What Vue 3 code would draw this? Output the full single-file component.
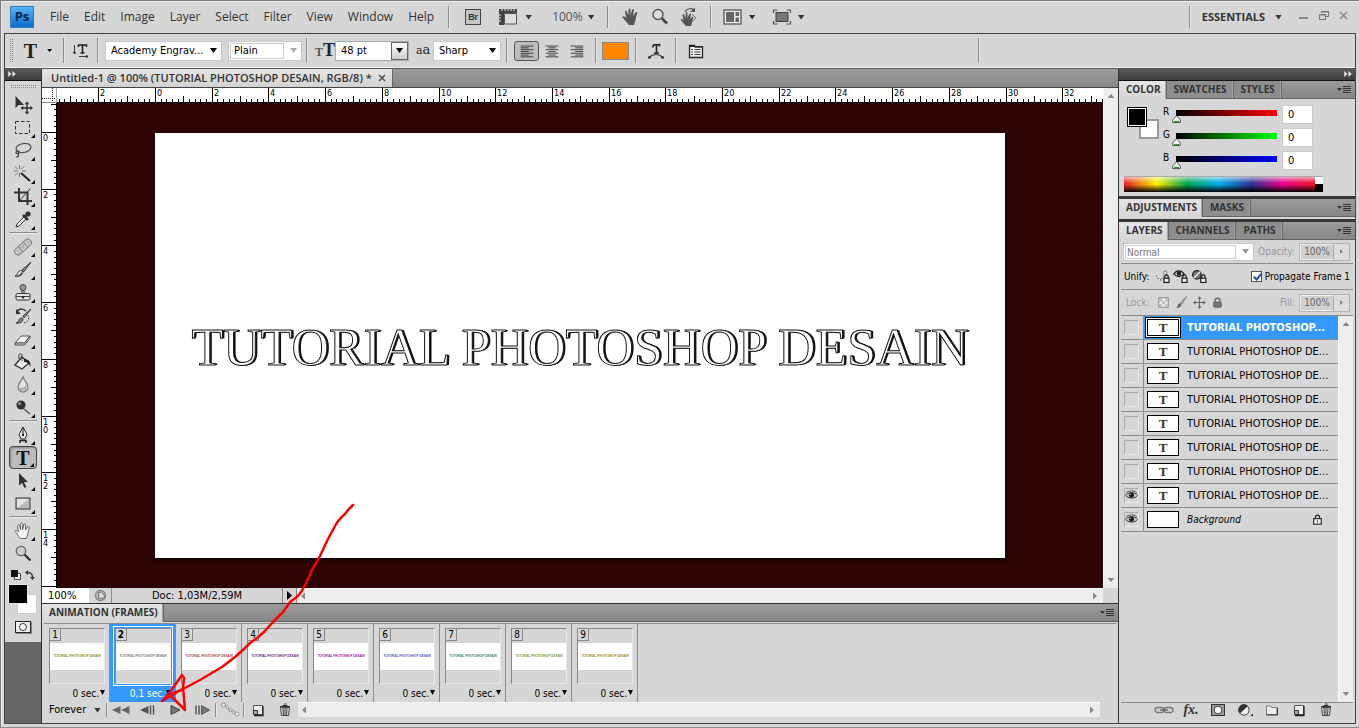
<script setup>
import { ref, computed, onMounted, onBeforeUnmount } from 'vue'

const menus = ['File', 'Edit', 'Image', 'Layer', 'Select', 'Filter', 'View', 'Window', 'Help']

const icons = {
  move: '<path d="M2.500 1v12l3-3 1.500 0h4z" fill="#333"/><path d="M14 8v10M9 13h10" stroke="#333" stroke-width="1.400"/><path d="M14 6.500l2.300 2.700h-4.600zM14 19.500l2.300-2.700h-4.600zM7.500 13l2.700-2.300v4.600zM20 13l-2.700-2.300v4.600z" fill="#333"/>',
  marquee: '<rect x="2.500" y="3.500" width="14" height="12" fill="none" stroke="#333" stroke-dasharray="3.500 2"/>',
  lasso: '<ellipse cx="10.500" cy="7" rx="7.500" ry="4.500" transform="rotate(-10 10.500 7)" fill="none" stroke="#555" stroke-width="1.300"/><path d="M4 10c-2 1-1 3 1 2.500s1-3-.5-2.500M5 12.500c1.500 2 0 3-1.500 4" fill="none" stroke="#444" stroke-width="1.300"/>',
  wand: '<path d="M8 9l9 8" stroke="#222" stroke-width="2"/><path d="M6.500 1v4M6.500 9v4M.5 7h4M9 7h4M2 2.500l3 3M11 2.500l-3 3M2 11.500l3-3" stroke="#777"/>',
  crop: '<path d="M6 1v13h13M1 5.500h13.500V18" fill="none" stroke="#333" stroke-width="2"/><path d="M17.500 1.500L7 13" stroke="#333"/>',
  eyedrop: '<path d="M3 17l1-3 7-7 2 2-7 7z" fill="#eee" stroke="#333"/><path d="M10 5l5 5M12 7l3.500-4" stroke="#333" stroke-width="2.500"/><circle cx="15" cy="4" r="2.600" fill="#333"/>',
  heal: '<g transform="rotate(-42 10 10)"><rect x="0" y="6.500" width="20" height="7" rx="3.500" fill="#ccc" stroke="#777"/><path d="M6.500 7v6M13.500 7v6" stroke="#888"/><path d="M8 9h1M11 9h1M9.500 11h1M3 9h1M3 11h1M16 9h1M16 11h1" stroke="#777"/></g>',
  brush: '<path d="M18 2L9 10l1.500 2z" fill="#999" stroke="#333"/><path d="M2 16c3 0 2-5 5.500-5.500 2 0 3 1.500 2 3C8 16 5 17 2 16z" fill="#eee" stroke="#333"/><path d="M3 16c3-.5 4-1.500 6-4 .5 2-2 4.500-6 4z" fill="#333"/>',
  stamp: '<circle cx="10" cy="4.500" r="3" fill="#999" stroke="#444"/><path d="M9 7.500v3M11 7.500v3" stroke="#333"/><rect x="3" y="10.500" width="14" height="6.500" rx="1.500" fill="#e4e4e4" stroke="#333"/><path d="M3 13.500h14" stroke="#444"/><path d="M8 13.500h4l-2 2.500z" fill="#222"/>',
  history: '<path d="M18 3l-8 7 1 2z" fill="#999" stroke="#333"/><path d="M3 17c3 0 2-4 5-5 2 0 2.500 1.500 1.500 3-1.500 2-4 2.500-6.500 2z" fill="#888" stroke="#333"/><path d="M4 5c3-3 7-2 9 0" fill="none" stroke="#333" stroke-width="1.500"/><path d="M3 3v5h5z" fill="#333"/><path d="M15 9c2 4 0 7-4 8" fill="none" stroke="#333" stroke-dasharray="1.500 1.500"/>',
  eraser: '<path d="M2 14l6-7h9l-5.500 7z" fill="#eee" stroke="#555"/><path d="M2 14h9.500l5.500-7v2.500L11.500 16H2z" fill="#ccc" stroke="#555"/>',
  bucket: '<path d="M2 13l7-8 7 6-7 6z" fill="#eee" stroke="#333" stroke-width="1.300"/><path d="M9 9V3.500C9 1 6 1 6 3.500V7" fill="none" stroke="#333"/><path d="M11 7c4 0 7 2 6.500 8-1-3-3-5-6.500-5z" fill="#222"/>',
  blur: '<path d="M10 2c1.500 4 5 6.500 5 10a5 5 0 01-10 0c0-3.500 3.500-6 5-10z" fill="#e4e4e4" stroke="#777" stroke-width="1.200"/><path d="M6.500 12a3.500 3.500 0 007 0c0-1-.5-2-1-3 0 4-3 5-6 3z" fill="#aaa"/>',
  dodge: '<circle cx="8" cy="7" r="4.600" fill="#333"/><circle cx="6.500" cy="5.500" r="1.500" fill="#999"/><path d="M11 11l6 5" stroke="#555" stroke-width="1.500"/>',
  pen: '<path d="M10 2L6 9.500 8 14h4l2-4.500z" fill="#eee" stroke="#222"/><path d="M10 3v6" stroke="#222"/><circle cx="10" cy="10" r="1.200" fill="#222"/><path d="M7 15.500h6v2.500M7 15v3" fill="none" stroke="#222" stroke-width="1.500"/>',
  path: '<path d="M6 2v12.500l3-2.500 2.500 5 2-1-2.500-5h4z" fill="#333"/>',
  shape: '<rect x="3" y="4" width="14" height="11" fill="#bbb" stroke="#333"/><path d="M4 14V5h12z" fill="#e4e4e4"/>',
  hand: '<path d="M7.500 17.500C5 15 3.500 12 2 10.500c0-2 2-1.500 3.500.5L4.500 5c0-2 1.800-2 2.200 0l.8 3.500V3.500c.2-1.800 2-1.800 2.200 0v5l1-4.500c.4-1.700 2.200-1.500 2 .3L12.500 9l1.800-3c1-1.300 2.500-.3 2 1-1 3.500-1.300 7.500-3.300 10.500z" fill="#f4f4f4" stroke="#666"/>',
  zoom: '<circle cx="8" cy="7" r="4.700" fill="#ccc" stroke="#666" stroke-width="1.300"/><path d="M11.500 10.500l6 6" stroke="#333" stroke-width="2.400"/>',
  handDark: '<path d="M8 18C5 15 3.500 12 1.500 10.500c0-2 2-1.500 4 .5L4 5c0-2 1.600-2 2 0l1.500 3.500V2.500c.2-1.500 1.800-1.500 2 0v6l1.500-5.500c.4-1.500 2-1.200 1.800.3L12 9l2.500-3.500c1-1 2.200-.2 1.700 1-1.700 4-1.700 8.500-3.200 11.500z" fill="#555"/>',
  zoomOpen: '<circle cx="8" cy="7.500" r="5" fill="#ddd" stroke="#555" stroke-width="1.400"/><path d="M12 11.500l5 5" stroke="#444" stroke-width="2.600"/>',
  rotate: '<path d="M7 19C5 17 3 14 1.500 13c0-1.500 1.500-1.500 3 0L3.500 8c0-1.500 1.300-1.500 1.800 0L6.500 11 6.800 6c.2-1.300 1.500-1.300 1.700 0v5l2-4c.6-1 1.800-.6 1.600.5L11 12l2-2c1-.8 2 0 1.400 1-1.400 3-1.400 6-2.400 8z" fill="#555"/><path d="M6 5c2-4 6-4 9-2" fill="none" stroke="#555" stroke-width="1.200"/><path d="M16 .5v4.500h-5z" fill="#555"/><path d="M13 7l4 4-4 4" fill="none" stroke="#777"/>',
  layout: '<rect x="1" y="3" width="17" height="14" fill="#eee" stroke="#555" stroke-width="1.300"/><path d="M3 5h8v10H3zM12.500 5H16v4h-3.500zM12.500 10.500H16V15h-3.500z" fill="#666"/>',
  screen: '<path d="M1.500 6V3h4M14.500 3h4v3M18.500 14v3h-4M5.500 17h-4v-3" fill="none" stroke="#555" stroke-width="1.200"/><rect x="4" y="5.500" width="12" height="9" fill="#777" stroke="#444"/>',
  extras: '<path d="M1 2h18v4H6v12H1z" fill="#444"/><path d="M4 2v2M7 2v2M10 2v2M13 2v2M16 2v2M1 8h2M1 11h2M1 14h2" stroke="#eee"/><path d="M6.500 6.500h12v10.500h-12z" fill="#ddd" stroke="#555"/>',
  warp: '<path d="M3 16.500c4-4 10-4 14 0" fill="none" stroke="#333" stroke-width="1.200"/><path d="M2 15.500h3v2H2zM15 15.500h3v2h-3z" fill="#333"/><path d="M6.500 6.500l1-2.500 6-.5v2M10.500 3.500v8M8 12h5" fill="none" stroke="#222" stroke-width="1.600"/>',
  palette: '<path d="M3.500 16.500V4.500h5l1 1.500h7v10.500z" fill="#eee" stroke="#222" stroke-width="1.300"/><path d="M4 5.500h12.500" stroke="#222"/><path d="M5 8.500h2M8.500 8.500h6M5 11h2M8.500 11h6M5 13.500h2M8.500 13.500h6" stroke="#444"/>',
  page: '<path d="M5.500 5.500h9v9H9l-3.500-4z" fill="#eee" stroke="#555"/><path d="M5.500 14.500v-4h4v4z" fill="#aaa" stroke="#333"/><path d="M15 6v9.500H6" fill="none" stroke="#222" stroke-width="1.300"/>',
  trash: '<path d="M5 6.500h10M7.500 5.500h5M9 4h2.500" stroke="#333" stroke-width="1.200"/><path d="M5.500 7.500h9l-1 8H6.500z" fill="#ddd" stroke="#444"/><path d="M8 8l.5 7M10 8v7M12 8l-.5 7" stroke="#444"/>',
  tween: '<circle cx="3.500" cy="5" r="2" fill="#eee" stroke="#888"/><circle cx="7.500" cy="7.500" r="1.500" fill="#ddd" stroke="#999"/><circle cx="10.500" cy="10" r="1.500" fill="#ddd" stroke="#999"/><circle cx="13.500" cy="12" r="1.500" fill="#ddd" stroke="#999"/><circle cx="17" cy="14" r="2" fill="#eee" stroke="#999"/>',
  rewind: '<path d="M9.500 6v8L1 10zM18.500 6v8L10 10z" fill="#666"/>',
  prev: '<path d="M10.500 6v8L2 10z" fill="#555"/><path d="M12.500 5.500v9M15.500 5.500v9" stroke="#555" stroke-width="1.500"/>',
  play: '<path d="M6 5.500v9l9-4.500z" fill="#777" stroke="#444"/>',
  next: '<path d="M9.500 5.500v9l8-4.500z" fill="#777" stroke="#555"/><path d="M4 5.500v9M7 5.500v9" stroke="#555" stroke-width="1.500"/>',
  link: '<rect x="1" y="7.500" width="9" height="5" rx="2.500" fill="none" stroke="#777" stroke-width="1.300"/><rect x="10" y="7.500" width="9" height="5" rx="2.500" fill="none" stroke="#777" stroke-width="1.300"/><path d="M6 10h8" stroke="#555" stroke-width="1.300"/>',
  mask: '<rect x="3.500" y="4.500" width="13" height="11" fill="#999" stroke="#333"/><circle cx="10" cy="10" r="3.800" fill="#fff" stroke="#444"/>',
  adjust: '<circle cx="9" cy="10" r="5.200" fill="#eee" stroke="#444"/><path d="M4.800 13.500A5.500 5.500 0 0113 6z" fill="#333"/><path d="M15.500 16h2.500v-2.500z" fill="#222"/>',
  folder: '<path d="M4.500 14.500V6h4l1 1.500h5.500v7z" fill="#eee" stroke="#777"/><path d="M4.500 15h11V8" fill="none" stroke="#333"/>',
  uPos: '<path d="M2 9v1M4 12v1M6 14h1M8 12v1M10 9v1" stroke="#333" stroke-width="1.500"/><circle cx="12" cy="5.500" r="2" fill="#eee" stroke="#666"/><path d="M11.500 12v-2c0-2.500 4-2.500 4 0v2" fill="none" stroke="#111" stroke-width="1.300"/><rect x="10.500" y="12" width="6" height="5" fill="#eee" stroke="#111" stroke-width="1.300"/>',
  uVis: '<path d="M1 7c3-5 9-5 12 0-3 4-9 4-12 0z" fill="#ddd" stroke="#222" stroke-width="1.500"/><circle cx="7" cy="6.500" r="2.700" fill="#222"/><path d="M11.500 12v-2c0-2.500 4-2.500 4 0v2" fill="none" stroke="#111" stroke-width="1.300"/><rect x="10.500" y="12" width="6" height="5" fill="#eee" stroke="#111" stroke-width="1.300"/>',
  uSty: '<circle cx="7" cy="8" r="5" fill="#777" stroke="#222" stroke-width="1.500"/><path d="M3 12L11 4" stroke="#eee" stroke-width="1.600"/><path d="M12.500 12v-2c0-2.500 4-2.500 4 0v2" fill="none" stroke="#111" stroke-width="1.300"/><rect x="11.500" y="12" width="6" height="5" fill="#eee" stroke="#111" stroke-width="1.300"/>',
  lTrans: '<rect x="4.500" y="4.500" width="11" height="11" fill="#eee" stroke="#777"/><path d="M5 5h3.500v3.500H5zM12 5h3v3.500h-3zM8.500 8.500H12V12H8.500zM5 12h3.500v3H5zM12 12h3v3h-3z" fill="#bbb"/>',
  lBrush: '<path d="M16 3L9 10l1.500 2z" fill="#bbb" stroke="#777"/><path d="M3 16c3 0 2-4.500 5-5 2 0 2.500 1.500 1.500 3-1.500 2-4 2.500-6.500 2z" fill="#666"/>',
  lMove: '<path d="M10 5v10M5 10h10" stroke="#666" stroke-width="1.300"/><path d="M10 2.500l2.500 3h-5zM10 17.500l2.500-3h-5zM2.500 10l3-2.500v5zM17.500 10l-3-2.500v5z" fill="#666"/>',
  lAll: '<path d="M7 10V8c0-4 6-4 6 0v2" fill="none" stroke="#666" stroke-width="1.600"/><rect x="5.500" y="9.500" width="9" height="6" rx="1" fill="#777" stroke="#555"/>',
  padlock: '<path d="M7.500 9V7.500c0-3.500 5-3.500 5 0V9" fill="none" stroke="#222" stroke-width="1.300"/><rect x="5.500" y="9" width="9" height="6.500" fill="#eee" stroke="#222" stroke-width="1.300"/><path d="M10 11v2.500" stroke="#222"/>',
  eye: '<path d="M2 10c3-5 13-5 16 0-3 4.500-13 4.500-16 0z" fill="#ccc" stroke="#333" stroke-width="1.300"/><circle cx="10" cy="9.700" r="3.300" fill="#111"/><path d="M3 6.500c3-3.500 11-3.500 14 0" fill="none" stroke="#444" stroke-width="1.300"/><circle cx="9" cy="8.700" r=".8" fill="#fff"/>',
}

const toolGroups = [
  ['move', 'marquee', 'lasso', 'wand', 'crop', 'eyedrop'],
  ['heal', 'brush', 'stamp', 'history', 'eraser', 'bucket', 'blur', 'dodge'],
  ['pen', 'type', 'path', 'shape'],
  ['hand', 'zoom'],
]

// Rulers: one tick per 2 mm, a label every 2 cm, cut to the visible length.
const CM = 28.35
const canvasEl = ref(null)
const canvasW = ref(1000)
const canvasH = ref(480)
function measure() {
  canvasW.value = canvasEl.value.clientWidth
  canvasH.value = canvasEl.value.clientHeight
}
onMounted(() => {
  measure()
  window.addEventListener('resize', measure)
})
onBeforeUnmount(() => window.removeEventListener('resize', measure))

function ticks(origin, length, major) {
  const out = []
  const step = CM / 5
  for (let i = -Math.floor(origin / step); origin + i * step < length; i++) {
    const pos = Math.round(origin + i * step) + 0.5
    const isMajor = i % 10 === 0
    out.push({
      pos,
      len: isMajor ? major : i % 5 === 0 ? 6 : 3,
      label: isMajor && pos < length - 16 ? String(Math.abs(i / 5)) : '',
    })
  }
  return out
}
const hTicks = computed(() => ticks((canvasW.value - 850) / 2, canvasW.value, 14))
const vTicks = computed(() => ticks((canvasH.value - 425) / 2 - 1, canvasH.value, 15))

const channels = ref([
  { name: 'R', value: 0, cls: 'red' },
  { name: 'G', value: 0, cls: 'green' },
  { name: 'B', value: 0, cls: 'blue' },
])

const layers = [
  { name: 'TUTORIAL PHOTOSHOP...', selected: true, text: true },
  ...Array.from({ length: 6 }, () => ({ name: 'TUTORIAL PHOTOSHOP DE...', text: true })),
  { name: 'TUTORIAL PHOTOSHOP DE...', text: true, visible: true },
  { name: 'Background', visible: true, locked: true },
]

const frames = [
  { color: '#908a1c', delay: '0 sec.' },
  { color: '#7a7a7a', delay: '0,1 sec.', selected: true },
  { color: '#b0403d', delay: '0 sec.' },
  { color: '#6a2580', delay: '0 sec.' },
  { color: '#a010a8', delay: '0 sec.' },
  { color: '#5a58c0', delay: '0 sec.' },
  { color: '#3a8472', delay: '0 sec.' },
  { color: '#76a030', delay: '0 sec.' },
  { color: '#a08a18', delay: '0 sec.' },
]
const propagate = ref(true)
</script>

<template>
  <div class="app">
    <header class="menubar">
      <div class="logo">Ps</div>
      <nav class="menus">
        <button v-for="m in menus" :key="m" class="menu">{{ m }}</button>
      </nav>
      <i class="rule"></i>
      <button class="bridge">Br</button>
      <button class="drop extras" aria-label="View extras"><svg class="ic" viewBox="0 0 20 20" v-html="icons.extras"></svg><i class="tri"></i></button>
      <button class="drop zoomlevel">100%<i class="tri"></i></button>
      <i class="rule"></i>
      <div class="navtools">
        <button aria-label="Hand"><svg class="ic" viewBox="0 0 20 20" v-html="icons.handDark"></svg></button>
        <button aria-label="Zoom"><svg class="ic" viewBox="0 0 20 20" v-html="icons.zoomOpen"></svg></button>
        <button aria-label="Rotate view"><svg class="ic" viewBox="0 0 20 20" v-html="icons.rotate"></svg></button>
      </div>
      <i class="rule"></i>
      <button class="drop" aria-label="Arrange documents"><svg class="ic" viewBox="0 0 20 20" v-html="icons.layout"></svg><i class="tri"></i></button>
      <button class="drop" aria-label="Screen mode"><svg class="ic" viewBox="0 0 20 20" v-html="icons.screen"></svg><i class="tri"></i></button>
      <i class="rule push"></i>
      <button class="workspace">ESSENTIALS<i class="tri"></i></button>
      <div class="winbtns">
        <button aria-label="Minimize"><svg viewBox="0 0 12 12"><path d="M1 8h9" stroke="#888" stroke-width="2" /></svg></button>
        <button aria-label="Restore"><svg viewBox="0 0 12 12"><path d="M3.500 3V1.500h7v5H8M1.500 4.500h6v5h-6zM1.500 5h6M4 2h6" fill="none" stroke="#777" /></svg></button>
        <button aria-label="Close"><svg viewBox="0 0 12 12"><path d="M2 2l7 7M9 2l-7 7" stroke="#888" stroke-width="1.500" /></svg></button>
      </div>
    </header>

    <div class="frame">
      <section class="options">
        <i class="grip"></i>
        <button class="tpreset">T<i class="tri small"></i></button>
        <i class="rule"></i>
        <button class="orient" aria-label="Text orientation">
          <svg class="ic" viewBox="0 0 20 20"><path d="M3.500 4v9M2 11l1.500 2L5 11M8 15.500h9M15 14l2 1.500-2 1.500" fill="none" stroke="#333" /><path d="M7.500 6V4h8v2M11.500 4v8M9.500 12h4" fill="none" stroke="#222" stroke-width="1.600" /></svg>
        </button>
        <i class="rule"></i>
        <span class="field family"><select aria-label="Font family"><option>Academy Engrav...</option></select><i class="tri"></i></span>
        <span class="field style"><select aria-label="Font style"><option>Plain</option></select><i class="tri"></i></span>
        <i class="rule"></i>
        <span class="tt" aria-hidden="true"><small>T</small>T</span>
        <span class="field size"><select aria-label="Font size"><option>48 pt</option></select><i class="arrowbox"><i class="tri"></i></i></span>
        <span class="aa" aria-hidden="true">a<b>a</b></span>
        <span class="field anti"><select aria-label="Anti-aliasing"><option>Sharp</option></select><i class="tri"></i></span>
        <i class="rule"></i>
        <div class="aligns">
          <button class="align on" aria-label="Left align"><svg class="ic" viewBox="0 0 20 20"><path d="M3 4.500h14M3 6.500h9M3 8.500h14M3 10.500h9M3 12.500h14M3 14.500h9M3 16.500h14" stroke="#333" /></svg></button>
          <button class="align" aria-label="Center"><svg class="ic" viewBox="0 0 20 20"><path d="M3 4.500h14M6 6.500h8M3 8.500h14M6 10.500h8M3 12.500h14M6 14.500h8M3 16.500h14" stroke="#333" /></svg></button>
          <button class="align" aria-label="Right align"><svg class="ic" viewBox="0 0 20 20"><path d="M3 4.500h14M8 6.500h9M3 8.500h14M8 10.500h9M3 12.500h14M8 14.500h9M3 16.500h14" stroke="#333" /></svg></button>
        </div>
        <i class="rule"></i>
        <button class="textcolor" aria-label="Text color"></button>
        <i class="rule"></i>
        <button class="optbtn" aria-label="Warp text"><svg class="ic" viewBox="0 0 20 20" v-html="icons.warp"></svg></button>
        <i class="rule"></i>
        <button class="optbtn" aria-label="Character panel"><svg class="ic" viewBox="0 0 20 20" v-html="icons.palette"></svg></button>
        <i class="rule end"></i>
      </section>

      <div class="work">
        <aside class="toolbox">
          <div class="darkhead"><svg viewBox="0 0 9 7"><path d="M0 0l4 3.500L0 7zM5 0l4 3.500L5 7z" fill="#ddd" /></svg></div>
          <div class="tools">
            <i class="hgrip"></i>
            <div v-for="(g, gi) in toolGroups" :key="gi" class="group">
              <button v-for="t in g" :key="t" :class="['tool', { on: t === 'type' }]" :aria-label="t">
                <span v-if="t === 'type'" class="bigt">T</span>
                <svg v-else class="ic" viewBox="0 0 20 20" v-html="icons[t]"></svg>
                <i v-if="t !== 'move' && t !== 'zoom'" class="corner"></i>
              </button>
            </div>
            <div class="swapline">
              <svg viewBox="0 0 12 12"><path d="M4.500 4.500h6v6h-6z" fill="#fff" stroke="#444" /><path d="M1 1h7v7H1z" fill="#111" /></svg>
              <svg viewBox="0 0 12 12"><path d="M3 3.500c4 0 5.500 1 5.500 5" fill="none" stroke="#333" stroke-width="1.500" /><path d="M4 1v5L1 3.500zM6 8h5l-2.500 3z" fill="#333" /></svg>
            </div>
            <div class="fgbg"><i class="bg"></i><i class="fg"></i></div>
            <button class="quick" aria-label="Quick mask"><i></i></button>
          </div>
        </aside>

        <main class="center">
          <div class="docbar">
            <div class="doctab">Untitled-1 @ 100% (TUTORIAL PHOTOSHOP DESAIN, RGB/8) *
              <button aria-label="Close document"><svg viewBox="0 0 8 8"><path d="M1 1l6 6M7 1L1 7" stroke="#444" stroke-width="1.400" /></svg></button>
            </div>
          </div>
          <div class="docarea">
            <div class="corner0"><svg viewBox="0 0 14 14"><path d="M0 10.500h14M10.500 0v14" stroke="#222" stroke-dasharray="1 1" /></svg></div>
            <svg class="hruler">
              <g v-for="t in hTicks" :key="t.pos">
                <line :x1="t.pos" :x2="t.pos" :y1="14 - t.len" y2="14" />
                <text v-if="t.label" :x="t.pos + 1.5" y="8">{{ t.label }}</text>
              </g>
            </svg>
            <div class="vscroll">
              <i class="up"></i><i class="down"></i>
            </div>
            <svg class="vruler">
              <g v-for="t in vTicks" :key="t.pos">
                <line :x1="15 - t.len" x2="15" :y1="t.pos" :y2="t.pos" />
                <text v-for="(d, di) in t.label" :key="di" x="1" :y="t.pos + 8.5 + di * 8">{{ d }}</text>
              </g>
            </svg>
            <div ref="canvasEl" class="canvas"><div class="page"><span>TUTORIAL PHOTOSHOP DESAIN</span></div></div>
          </div>
          <div class="status">
            <input class="pct" value="100%" aria-label="Zoom level" />
            <span class="clock"><svg viewBox="0 0 14 14"><circle cx="7" cy="7" r="5.500" fill="#bbb" stroke="#888" stroke-width="1.500" /><path d="M5 3.500h3l3 3V10H5z" fill="#ddd" stroke="#666" /></svg></span>
            <span class="docsize">Doc: 1,03M/2,59M</span>
            <button class="more" aria-label="Status options"><i></i></button>
            <div class="hscroll"><i class="toleft"></i><i class="toright"></i></div>
            <i class="sizer"></i>
          </div>

          <section class="anim">
            <div class="tabs"><button class="tab on">ANIMATION (FRAMES)</button><i class="panelmenu"></i></div>
            <div class="frames">
              <div v-for="(f, i) in frames" :key="i" :class="['cell', { sel: f.selected }]">
                <div class="shot"><b>{{ i + 1 }}</b><span :style="{ color: f.color }">TUTORIAL PHOTOSHOP DESAIN</span></div>
                <div class="delay">{{ f.delay }}<i class="tri"></i></div>
              </div>
            </div>
            <div class="controls">
              <span class="loop"><select aria-label="Looping"><option>Forever</option></select><i class="tri"></i></span>
              <i class="rule"></i>
              <button aria-label="First frame"><svg class="ic" viewBox="0 0 20 20" v-html="icons.rewind"></svg></button>
              <button aria-label="Previous frame"><svg class="ic" viewBox="0 0 20 20" v-html="icons.prev"></svg></button>
              <button aria-label="Play"><svg class="ic" viewBox="0 0 20 20" v-html="icons.play"></svg></button>
              <button aria-label="Next frame"><svg class="ic" viewBox="0 0 20 20" v-html="icons.next"></svg></button>
              <i class="rule"></i>
              <button aria-label="Tween"><svg class="ic" viewBox="0 0 20 20" v-html="icons.tween"></svg></button>
              <i class="rule"></i>
              <button aria-label="Duplicate frame"><svg class="ic" viewBox="0 0 20 20" v-html="icons.page"></svg></button>
              <button aria-label="Delete frame"><svg class="ic" viewBox="0 0 20 20" v-html="icons.trash"></svg></button>
              <div class="hscroll"><i class="toleft"></i><i class="toright"></i></div>
            </div>
          </section>
        </main>

        <aside class="panels">
          <div class="darkhead end"><svg viewBox="0 0 9 7"><path d="M0 0l4 3.500L0 7zM5 0l4 3.500L5 7z" fill="#ddd" /></svg></div>
          <section class="panel color">
            <div class="tabs"><button class="tab on">COLOR</button><button class="tab">SWATCHES</button><button class="tab">STYLES</button><i class="panelmenu"></i></div>
            <div class="mixer">
              <div class="pair"><i class="bg"></i><i class="fg"></i></div>
              <div class="sliders">
                <label v-for="c in channels" :key="c.name" class="chan">
                  <span>{{ c.name }}</span>
                  <input v-model.number="c.value" type="range" min="0" max="255" :class="c.cls" />
                  <input v-model.number="c.value" class="num" :aria-label="c.name + ' value'" />
                </label>
              </div>
            </div>
            <div class="spectrum"><i class="hue"></i><i class="bw"></i></div>
          </section>
          <section class="panel adj">
            <div class="tabs"><button class="tab on">ADJUSTMENTS</button><button class="tab">MASKS</button><i class="panelmenu"></i></div>
          </section>
          <section class="panel layers">
            <div class="tabs"><button class="tab on">LAYERS</button><button class="tab">CHANNELS</button><button class="tab">PATHS</button><i class="panelmenu"></i></div>
            <div class="lrow first">
              <span class="field blend"><select aria-label="Blend mode"><option>Normal</option></select><i class="tri"></i></span>
              <label class="amount">Opacity: <span class="spin"><input value="100%" /><i></i></span></label>
            </div>
            <div class="lrow">
              <span class="lbl">Unify:</span>
              <button v-for="n in ['uPos', 'uVis', 'uSty']" :key="n" class="mini" :aria-label="n"><svg class="ic small" viewBox="0 0 20 20" v-html="icons[n]"></svg></button>
              <label class="prop"><input v-model="propagate" type="checkbox" />Propagate Frame 1</label>
            </div>
            <div class="lrow">
              <span class="lbl dim">Lock:</span>
              <button v-for="n in ['lTrans', 'lBrush', 'lMove', 'lAll']" :key="n" class="mini" :aria-label="n"><svg class="ic small" viewBox="0 0 20 20" v-html="icons[n]"></svg></button>
              <label class="amount">Fill: <span class="spin"><input value="100%" /><i></i></span></label>
            </div>
            <div class="listwrap">
              <ul class="list">
                <li v-for="(l, i) in layers" :key="i" :class="{ sel: l.selected }">
                  <button class="vis" aria-label="Visibility"><i><svg v-if="l.visible" class="eye" viewBox="0 0 20 20" v-html="icons.eye"></svg></i></button>
                  <span class="thumb">{{ l.text ? 'T' : '' }}</span>
                  <span :class="['lname', { it: l.locked }]">{{ l.name }}</span>
                  <svg v-if="l.locked" class="ic small lock" viewBox="0 0 20 20" v-html="icons.padlock"></svg>
                </li>
              </ul>
              <div class="vscroll"><i class="up"></i><i class="down"></i></div>
            </div>
            <div class="lfoot">
              <button aria-label="Link layers"><svg class="ic" viewBox="0 0 20 20" v-html="icons.link"></svg></button>
              <button class="fx">fx.</button>
              <button aria-label="Add mask"><svg class="ic" viewBox="0 0 20 20" v-html="icons.mask"></svg></button>
              <button aria-label="Adjustment layer"><svg class="ic" viewBox="0 0 20 20" v-html="icons.adjust"></svg></button>
              <button aria-label="New group"><svg class="ic" viewBox="0 0 20 20" v-html="icons.folder"></svg></button>
              <button aria-label="New layer"><svg class="ic" viewBox="0 0 20 20" v-html="icons.page"></svg></button>
              <button aria-label="Delete layer"><svg class="ic" viewBox="0 0 20 20" v-html="icons.trash"></svg></button>
            </div>
          </section>
        </aside>
      </div>
    </div>

    <svg class="scribble">
      <path d="M353 505L348 510L345 514Q338 520 335 526L328 539L320 556L312 570L307 581Q302 592 297 597L290 602L283 612L273 622L264 632L257 638L250 643L243 650L235 657L222 667L200 680L183 689L170 695" />
      <path d="M162 701L170 692L182 675L184 678L183 687L185 710L172 697" />
      <path d="M162 701L176 693" />
    </svg>
  </div>
</template>

<style>
body { background: #d6d6d6; }
</style>

<style scoped>
* { box-sizing: border-box; }
.app { position: relative; display: flex; flex-direction: column; height: 100vh; min-height: 600px; border-top: 1px solid #7c7c7c; border-left: 1px solid #7c7c7c; border-bottom: 1px solid #8a8a8a; background: #d6d6d6; color: #000; font: 11px/14px "DejaVu Sans Condensed", "DejaVu Sans", sans-serif; box-shadow: inset 1px 1px #eee; overflow: hidden; }
button { border: 0; padding: 0; margin: 0; background: none; color: inherit; font: inherit; display: flex; align-items: center; justify-content: center; flex: none; }
input, select { font: inherit; color: inherit; border: 0; margin: 0; padding: 0; border-radius: 0; background: none; appearance: none; min-width: 0; }
i { display: block; flex: none; }
.ic { width: 20px; height: 20px; display: block; flex: none; }
.ic.small { width: 17px; height: 17px; }
.tri { width: 7px; height: 5px; background: #333; clip-path: polygon(0 0, 100% 0, 50% 100%); }
.rule { width: 1px; height: 22px; background: #8c8c8c; box-shadow: 1px 0 #e8e8e8; }

.menubar { display: flex; align-items: center; height: 32px; padding: 0 9px 0 9px; font: 12px/16px "Open Sans", "Noto Sans", sans-serif; color: #333; flex: none; }
.logo { width: 24px; height: 22px; background: linear-gradient(#57b3f2, #0a6fd0); border: 1px solid #2a7fc8; color: #0c2440; font: bold 13px/19px "Open Sans", sans-serif; text-align: center; margin-right: 16px; }
.menus { display: flex; gap: 15px; margin-right: 14px; }
.bridge { width: 16px; height: 16px; border: 1px solid #444; background: #c4c4c4; font: bold 9px/14px "Liberation Sans", sans-serif; margin: 0 17px 0 16px; }
.drop { gap: 6px; margin-right: 16px; }
.extras { gap: 7px; margin-right: 20px; }
.zoomlevel { gap: 5px; color: #555; margin-right: 12px; }
.navtools { display: flex; gap: 9px; margin: 0 11px 0 13px; }
.navtools + .rule { margin-right: 12px; }
.push { margin-left: auto; }
.workspace { font: bold 11px/16px "Open Sans", "Noto Sans", sans-serif; gap: 10px; margin: 0 16px 0 12px; }
.winbtns { display: flex; gap: 8px; margin-bottom: 3px; }
.winbtns svg { width: 12px; height: 12px; }

.frame { flex: 1; min-height: 0; margin: 0 3px 3px 3px; border: 1px solid #444; display: flex; flex-direction: column; }
.options { display: flex; align-items: center; height: 34px; border-bottom: 1px solid #f0f0f0; padding-left: 4px; flex: none; }
.options .rule { height: 25px; }
.grip { width: 4px; height: 24px; background: conic-gradient(#888 25%, #0000 0) 0 0 / 2px 2px; }
.tpreset { width: 50px; gap: 10px; font: bold 20px/24px "Liberation Serif", serif; color: #222; }
.tri.small { width: 5px; height: 3px; background: #000; }
.orient { width: 33px; }
.field { display: flex; align-items: center; height: 20px; background: #fff; border: 1px solid #c8c8d0; padding-right: 4px; }
.field select { flex: 1; width: 0; height: 100%; padding-left: 5px; }
.field .tri { background: #000; }
.family { width: 117px; margin-left: 7px; }
.style { width: 74px; margin: 0 4px 0 6px; }
.style select { border: 1px solid #ccc; margin: 1px 6px 1px 1px; height: 16px; padding-left: 3px; }
.style .tri { background: #aaa; }
.tt { display: flex; align-items: baseline; font: bold 18px/20px "Liberation Serif", serif; margin: 0 2px 0 8px; color: #222; width: 18px; white-space: nowrap; }
.tt small { font-size: 12px; color: #555; }
.size { width: 74px; border-color: #aaa; padding: 0; }
.arrowbox { width: 17px; height: 18px; border: 1px solid #666; background: linear-gradient(#fff, #ccc); display: flex; align-items: center; justify-content: center; }
.aa { font: 11px/16px "DejaVu Serif", serif; color: #222; margin: 0 3px 0 7px; width: 14px; display: flex; align-items: baseline; }
.aa b { font-size: 13px; font-weight: 400; }
.anti { width: 68px; margin-right: 5px; }
.aligns { display: flex; margin: 0 6px 0 7px; }
.align { width: 25px; height: 20px; }
.align.on { border: 1px solid #555; border-radius: 3px; background: #bcbcbc; }
.align .ic { width: 18px; height: 20px; }
.textcolor { width: 27px; height: 18px; background: #ff8800; border: 1px solid #8a8a8a; margin: 0 6px; }
.optbtn { width: 39px; }
.optbtn + .end { margin-left: 263px; }

.work { flex: 1; min-height: 0; display: flex; border-top: 1px solid #555; }
.toolbox { width: 37px; flex: none; background: #656565; border-right: 1px solid #333; display: flex; flex-direction: column; }
.darkhead { height: 12px; background: linear-gradient(#5a5a5a, #3c3c3c); border-bottom: 1px solid #111; padding: 2px 3px; flex: none; display: flex; }
.darkhead.end { justify-content: flex-end; }
.darkhead svg { width: 8px; height: 6px; }
.tools { background: #d6d6d6; padding: 4px 4px 9px; display: flex; flex-direction: column; }
.hgrip { height: 4px; margin: 0 1px 4px; background: conic-gradient(#888 25%, #0000 0) 0 0 / 2px 2px; }
.group + .group { border-top: 1px solid #8c8c8c; margin-top: 1px; padding-top: 2px; box-shadow: inset 0 1px #eee; }
.tool { width: 28px; height: 23px; position: relative; }
.tool.on { border: 1px solid #444; border-radius: 4px; background: #bcbcbc; box-shadow: inset 1px 1px 2px #888; }
.bigt { font: bold 20px/22px "Liberation Serif", serif; color: #111; }
.corner { position: absolute; right: 2px; bottom: 1px; width: 4px; height: 4px; background: #000; clip-path: polygon(100% 0, 100% 100%, 0 100%); }
.swapline { display: flex; justify-content: space-between; padding: 0 1px; margin-top: 4px; height: 12px; }
.swapline svg { width: 12px; height: 12px; }
.fgbg { position: relative; height: 32px; margin: 3px 0 5px; }
.fgbg i { position: absolute; width: 20px; height: 20px; border: 1px solid #eee; }
.fgbg .fg { left: -1px; top: 0; background: #000; }
.fgbg .bg { left: 8px; top: 10px; background: #fff; border-color: #ccc; }
.quick { width: 16px; height: 12px; border: 1px solid #222; background: #eee; margin-left: 6px; box-shadow: 1px 1px #888; }
.quick i { width: 8px; height: 8px; border: 1px solid #333; border-radius: 50%; background: #fff; }

.center { flex: 1; min-width: 0; display: flex; flex-direction: column; }
.docbar { height: 19px; background: linear-gradient(#9c9c9c, #868686); border-bottom: 1px solid #444; display: flex; flex: none; }
.doctab { display: flex; align-items: center; justify-content: space-between; background: linear-gradient(#e6e6e6, #d2d2d2); border-right: 1px solid #666; padding: 0 6px 0 9px; gap: 6px; font: 600 11px/16px "Open Sans", "Noto Sans", sans-serif; color: #333; white-space: nowrap; }
.doctab svg { width: 8px; height: 8px; display: block; }
.docarea { flex: 1; min-height: 0; display: grid; grid-template: 15px 1fr / 15px 1fr 15px; overflow: hidden; }
.corner0 { background: #fff; border-right: 1px solid #aaa; border-bottom: 1px solid #888; overflow: hidden; }
.corner0 svg { width: 14px; height: 14px; display: block; }
.hruler { width: 100%; height: 15px; background: #fff; border-bottom: 1px solid #000; display: block; overflow: hidden; }
.vruler { width: 15px; height: 100%; background: #fff; border-right: 1px solid #000; display: block; overflow: hidden; }
.hruler line, .vruler line { stroke: #000; }
.hruler text, .vruler text { font: 9px "DejaVu Sans Condensed", sans-serif; fill: #000; }
.vscroll { background: #ededed; border-left: 1px solid #fafafa; display: flex; flex-direction: column; justify-content: space-between; align-items: center; padding: 6px 0; }
.docarea .vscroll { grid-column: 3; grid-row: 1 / 3; }
.docarea .vruler { grid-column: 1; grid-row: 2; }
.docarea .canvas { grid-column: 2; grid-row: 2; }
.up, .down { width: 7px; height: 4px; background: #888; clip-path: polygon(0 100%, 50% 0, 100% 100%); }
.down { clip-path: polygon(0 0, 50% 100%, 100% 0); }
.canvas { background: #2d0303; display: flex; align-items: center; justify-content: center; overflow: hidden; }
.page { width: 850px; height: 425px; background: #fff; box-shadow: 1px 2px 3px #100; display: flex; align-items: center; justify-content: center; flex: none; }
.page span { font: 52px/60px "Liberation Serif", serif; color: #fff; -webkit-text-stroke: 1px #111; text-shadow: 1px 0 #111, 2px 0 #111; white-space: nowrap; padding-top: 4px; }
.status { height: 16px; display: flex; border-bottom: 1px solid #333; flex: none; line-height: 15px; }
.pct { width: 47px; background: #fff; padding-left: 6px; }
.clock { width: 23px; display: flex; align-items: center; justify-content: center; border-right: 1px solid #888; }
.clock svg { width: 13px; height: 13px; }
.docsize { width: 171px; text-align: center; border-right: 1px solid #888; }
.more { width: 14px; border-right: 1px solid #888; }
.more i { width: 5px; height: 9px; background: #000; clip-path: polygon(0 0, 100% 50%, 0 100%); }
.hscroll { flex: 1; background: #ededed; border-top: 1px solid #fafafa; display: flex; justify-content: space-between; align-items: center; padding: 0 6px 0 4px; }
.toleft, .toright { width: 4px; height: 7px; background: #888; clip-path: polygon(100% 0, 100% 100%, 0 50%); }
.toright { clip-path: polygon(0 0, 100% 50%, 0 100%); }
.sizer { width: 15px; }

.tabs { display: flex; height: 18px; background: linear-gradient(#9c9c9c, #868686); border-bottom: 1px solid #666; flex: none; font: bold 10px/14px "Open Sans", "Noto Sans", sans-serif; color: #333; align-items: flex-start; }
.tab { height: 17px; padding: 0 6px 1px 7px; background: #8e8e8e; border-right: 1px solid #666; box-shadow: inset -1px 0 #a4a4a4; white-space: nowrap; }
.tab.on { height: 18px; padding: 0 5px 2px 7px; background: linear-gradient(#e4e4e4, #d6d6d6); }
.panelmenu { width: 14px; height: 9px; margin: 5px 4px 0 auto; background: linear-gradient(#333, #333) 6px 0 / 8px 1px no-repeat, linear-gradient(#333, #333) 6px 2px / 8px 1px no-repeat, linear-gradient(#333, #333) 6px 4px / 8px 1px no-repeat, linear-gradient(#333, #333) 6px 6px / 8px 1px no-repeat; position: relative; }
.panelmenu::before { content: ""; position: absolute; left: 0; top: 2px; width: 5px; height: 3px; background: #333; clip-path: polygon(0 0, 100% 0, 50% 100%); }
.anim { flex: none; height: 119px; display: flex; flex-direction: column; }
.frames { display: flex; height: 79px; border-top: 1px solid #8c8c8c; margin: 1px 2px 0; flex: none; }
.cell { width: 66px; border-right: 1px solid #8c8c8c; padding: 4px 4px 0 5px; flex: none; }
.shot { position: relative; height: 56px; border: 1px solid #888; border-right-color: #e8e8e8; border-bottom-color: #e8e8e8; display: flex; align-items: center; }
.shot b { position: absolute; left: 0; top: 0; width: 11px; height: 12px; background: #d6d6d6; border-right: 1px solid #888; border-bottom: 1px solid #888; font: 10px/11px "DejaVu Sans Condensed", sans-serif; text-align: center; }
.shot span { flex: 1; height: 27px; background: #fff; font: bold 3px/27px "Liberation Sans", sans-serif; text-align: center; white-space: nowrap; }
.delay { display: flex; justify-content: flex-end; gap: 1px; padding-top: 3px; font-size: 10px; white-space: nowrap; }
.delay .tri { background: #000; margin-top: 3px; width: 5px; }
.cell.sel { background: #3399ff; }
.cell.sel .shot { background: #d6d6d6; box-shadow: 0 0 0 1px #3399ff, 0 0 0 2px #fff; }
.cell.sel .shot b { font-weight: bold; }
.cell.sel .delay { color: #fff; }
.controls { display: flex; height: 16px; align-items: center; margin: 0 18px 0 0; }
.controls .rule { height: 14px; }
.loop { display: flex; align-items: center; width: 64px; padding: 0 5px 0 7px; }
.loop select { flex: 1; width: 0; }
.controls button { width: 27px; }
.controls .hscroll { height: 15px; align-self: flex-start; }

.panels { width: 237px; flex: none; border-left: 1px solid #333; display: flex; flex-direction: column; }
.panel { flex: none; border-bottom: 3px solid #3a3638; }
.color { height: 118px; }
.mixer { display: flex; padding: 4px 0 0 8px; height: 77px; }
.pair { position: relative; width: 36px; margin-top: 5px; flex: none; }
.pair i { position: absolute; width: 20px; height: 20px; }
.pair .fg { left: 0; top: -1px; background: #000; border: 1px solid #000; box-shadow: inset 0 0 0 1px #fff; }
.pair .bg { left: 12px; top: 11px; background: #fff; border: 2px solid #999; }
.chan { display: flex; align-items: center; height: 23px; }
.chan span { width: 13px; align-self: flex-start; padding-top: 2px; font-size: 10px; }
.chan input[type="range"] { width: 101px; height: 18px; background: linear-gradient(90deg, #000, var(--c)) 0 4px / 100% 6px no-repeat; }
.chan .red { --c: #f00; }
.chan .green { --c: #0f0; }
.chan .blue { --c: #00f; }
.chan input::-webkit-slider-runnable-track { height: 18px; }
.chan input::-webkit-slider-thumb { appearance: none; width: 9px; height: 8px; margin: 9px 0 0 -4px; background: url("data:image/svg+xml,%3Csvg xmlns='http://www.w3.org/2000/svg' viewBox='0 0 9 8'%3E%3Cpath d='M4.500 .7L.7 5v2.500h7.600V5z' fill='white' stroke='%23555'/%3E%3Cpath d='M2 6.500h5' stroke='%23289428' stroke-width='1.300'/%3E%3C/svg%3E") no-repeat; }
.chan .num { width: 31px; height: 19px; background: #fff; border: 1px solid #ccc; padding-left: 5px; margin-left: 5px; }
.spectrum { display: flex; width: 199px; height: 16px; margin: 0 0 0 5px; border-top: 1px solid #aaa; }
.hue { flex: 1; background: linear-gradient(#fff9, #fff0 40%, #0000 50%, #000 100%), linear-gradient(90deg, #e8202a, #fff000 17%, #00a550 33%, #00aeef 50%, #2e3192 67%, #ec008c 83%, #ed1c24); }
.bw { width: 8px; background: linear-gradient(#fff 50%, #000 50%); }
.adj { height: 23px; }
.layers { flex: 1; min-height: 0; display: flex; flex-direction: column; border: 0; }
.lrow { display: flex; align-items: center; height: 26px; margin: 0 2px; padding: 0 3px 0 3px; border-bottom: 1px solid #8c8c8c; flex: none; }
.lrow.first { height: 24px; padding-left: 2px; }
.blend { width: 131px; height: 18px; color: #777; }
.blend select { border: 1px solid #ccc; height: 14px; margin: 0 6px 0 1px; padding-left: 1px; font-size: 10px; }
.blend .tri { background: #999; }
.amount { display: flex; align-items: center; gap: 4px; margin-left: auto; color: #999; font-size: 10px; }
.spin { display: flex; width: 51px; height: 18px; border: 1px solid #b4b4b8; background: #ddd; color: #666; align-items: center; }
.spin input { width: 34px; height: 16px; text-align: center; border: 1px solid #eee; border-right: 1px solid #aaa; background: #cfcfcf; }
.spin i { width: 3px; height: 5px; margin-left: 6px; background: #888; clip-path: polygon(0 0, 100% 50%, 0 100%); }
.lbl { width: 30px; font-size: 10px; }
.lbl.dim { color: #999; padding-left: 2px; }
.mini { width: 18px; }
.prop { display: flex; align-items: center; gap: 3px; margin-left: auto; font-size: 10px; }
.prop input { width: 11px; height: 11px; border: 1px solid #555; background: #fff; }
.prop input:checked::before { content: ""; display: block; width: 3px; height: 6px; margin: 0 0 0 3px; border: solid #2a4a9a; border-width: 0 2px 2px 0; rotate: 40deg; }
.listwrap { flex: 1; min-height: 0; display: flex; margin: 0 2px; }
.list { list-style: none; flex: 1; margin: 0; padding: 0; min-width: 0; }
.list li { display: flex; align-items: center; height: 24px; border-bottom: 1px solid #8c8c8c; }
.vis { width: 23px; height: 23px; border-right: 1px solid #8c8c8c; background: #d6d6d6; padding-right: 1px; }
.vis i { width: 15px; height: 15px; border: 1px solid #aaa; border-right-color: #e8e8e8; border-bottom-color: #e8e8e8; display: flex; align-items: center; justify-content: center; }
.eye { width: 15px; height: 15px; flex: none; }
.thumb { width: 32px; height: 17px; margin: 0 8px 0 3px; border: 1px solid #000; background: #fff; font: bold 13px/15px "Liberation Serif", serif; color: #333; text-align: center; flex: none; }
.lname { white-space: nowrap; }
.it { font-style: italic; font-size: 10px; }
.lock { margin-left: auto; margin-right: 12px; }
.list li.sel { background: #3399ff; color: #fff; font-weight: bold; }
.sel .thumb { box-shadow: 0 0 0 1px #fff, 0 0 0 2px #000; }
.listwrap .vscroll { width: 15px; flex: none; }
.lfoot { display: flex; align-items: center; justify-content: flex-end; gap: 7px; height: 21px; margin: 0 2px; border-top: 1px solid #8c8c8c; padding: 0 17px 6px 0; flex: none; }
.fx { width: 20px; font: italic bold 14px/14px "Liberation Serif", serif; color: #333; }
.scribble { position: absolute; left: -1px; top: -1px; width: 100%; height: 100%; pointer-events: none; }
.scribble path { fill: none; stroke: #f00; stroke-width: 2.500; stroke-linejoin: round; stroke-linecap: round; }
</style>
